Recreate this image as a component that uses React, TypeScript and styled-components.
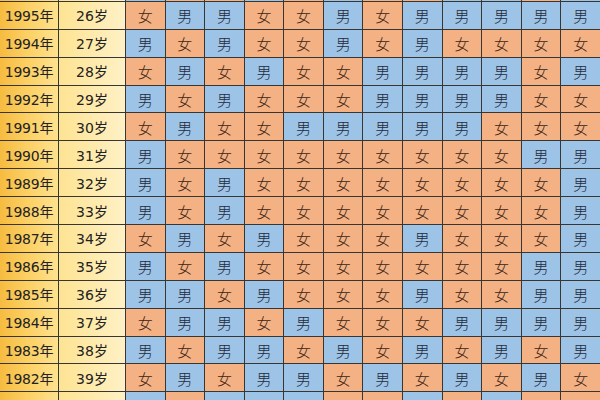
import styled, { createGlobalStyle } from 'styled-components';

const GlobalStyle = createGlobalStyle`
  html, body {
    margin: 0;
    padding: 0;
    width: 600px;
    height: 400px;
    overflow: hidden;
    background: #ffffff;
  }
`;

const Viewport = styled.div`
  width: 600px;
  height: 400px;
  overflow: hidden;
`;

// the screenshot is a crop of a bigger sheet: a sliver of the row above 1995
// and of the row below 1982 shows, so the grid starts a row early
const Table = styled.div`
  display: grid;
  grid-template-columns: 58px 66px repeat(12, 1fr);
  grid-auto-rows: 26.9px;
  gap: 1px;
  margin-top: -26px;
  background-color: #383632;
  font-family: 'DejaVu Sans', 'Noto Sans CJK SC', sans-serif;
  color: #222;
`;

const Cell = styled.div`
  display: flex;
  align-items: center;
  justify-content: center;
  white-space: nowrap;
`;

const YearCell = styled(Cell)`
  font-size: 14px;
  letter-spacing: -0.2px;
  background: linear-gradient(90deg, #f6bb40 0%, #fbcf62 45%, #ffe28e 100%);
`;

const AgeCell = styled(Cell)`
  font-size: 14px;
  background: linear-gradient(90deg, #fde393 0%, #feeaab 50%, #fff1c6 100%);
`;

const SexCell = styled(Cell)<{ $boy: boolean }>`
  font-family: 'Noto Sans CJK SC', sans-serif;
  font-size: 15px;
  font-weight: 300;
  padding-top: 1px;
  background-color: ${(p) => (p.$boy ? '#9dc3e6' : '#f4b183')};
  color: ${(p) => (p.$boy ? '#1f2a3a' : '#3a2418')};
`;

type RowData = { year: number; sexes: string; sliver?: boolean };

const rows: RowData[] = [
  { year: 1996, sexes: '男女女男女男女女男男女男', sliver: true },
  { year: 1995, sexes: '女男男女女男女男男男男男' },
  { year: 1994, sexes: '男女男女女男女男女女女女' },
  { year: 1993, sexes: '女男女男女女男男男男女男' },
  { year: 1992, sexes: '男女男女女女男男男男女女' },
  { year: 1991, sexes: '女男女女男男男男男女女女' },
  { year: 1990, sexes: '男女女女女女女女女女男男' },
  { year: 1989, sexes: '男女男女女女女女女女女男' },
  { year: 1988, sexes: '男女男女女女女女女女女男' },
  { year: 1987, sexes: '女男女男女女女男女女女男' },
  { year: 1986, sexes: '男女男女女女女女女女男男' },
  { year: 1985, sexes: '男男女男女女女男女女男男' },
  { year: 1984, sexes: '女男男女男女女女男男男男' },
  { year: 1983, sexes: '男女男男女男女男女男女男' },
  { year: 1982, sexes: '女男女男男女男女男女男女' },
  { year: 1981, sexes: '男女男男男女女男女男女女', sliver: true },
];

const Row = ({ year, sexes, sliver }: RowData) => (
  <>
    <YearCell>{sliver ? null : `${year}年`}</YearCell>
    <AgeCell>{sliver ? null : `${2021 - year}岁`}</AgeCell>
    {sexes.split('').map((s, i) => (
      <SexCell key={i} $boy={s === '男'}>
        {sliver ? null : s}
      </SexCell>
    ))}
  </>
);

export default function App() {
  return (
    <Viewport>
      <GlobalStyle />
      <Table>
        {rows.map((r) => (
          <Row key={r.year} {...r} />
        ))}
      </Table>
    </Viewport>
  );
}
